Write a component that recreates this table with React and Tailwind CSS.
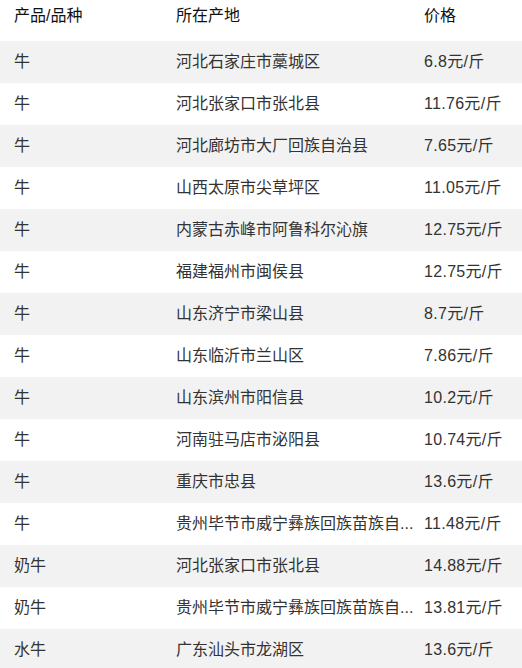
const rows = [
  ["牛", "河北石家庄市藁城区", "6.8元/斤"],
  ["牛", "河北张家口市张北县", "11.76元/斤"],
  ["牛", "河北廊坊市大厂回族自治县", "7.65元/斤"],
  ["牛", "山西太原市尖草坪区", "11.05元/斤"],
  ["牛", "内蒙古赤峰市阿鲁科尔沁旗", "12.75元/斤"],
  ["牛", "福建福州市闽侯县", "12.75元/斤"],
  ["牛", "山东济宁市梁山县", "8.7元/斤"],
  ["牛", "山东临沂市兰山区", "7.86元/斤"],
  ["牛", "山东滨州市阳信县", "10.2元/斤"],
  ["牛", "河南驻马店市泌阳县", "10.74元/斤"],
  ["牛", "重庆市忠县", "13.6元/斤"],
  ["牛", "贵州毕节市威宁彝族回族苗族自...", "11.48元/斤"],
  ["奶牛", "河北张家口市张北县", "14.88元/斤"],
  ["奶牛", "贵州毕节市威宁彝族回族苗族自...", "13.81元/斤"],
  ["水牛", "广东汕头市龙湖区", "13.6元/斤"],
];

export default function App() {
  return (
    <div
      className="w-[522px] h-[668px] overflow-hidden bg-white text-[16px]"
      style={{ fontFamily: '"Liberation Sans", "Noto Sans CJK SC", sans-serif' }}
    >
      <div className="flex h-[41px] pt-[5px] leading-[22px] text-[#111]">
        <div className="w-[162px] pl-[14px]">产品/品种</div>
        <div className="w-[256px] pl-[14px]">所在产地</div>
        <div className="flex-1 pl-[6px]">价格</div>
      </div>
      {rows.map((r, i) => (
        <div
          key={i}
          className={`flex h-[42px] items-center leading-[22px] text-[#333] ${
            i % 2 === 0 ? "bg-[#f2f2f2]" : "bg-white"
          }`}
        >
          <div className="w-[162px] shrink-0 pl-[14px]">{r[0]}</div>
          <div className="w-[256px] shrink-0 pl-[14px] whitespace-nowrap">{r[1]}</div>
          <div className="flex-1 pl-[6px] whitespace-nowrap tracking-[0.3px]">{r[2]}</div>
        </div>
      ))}
    </div>
  );
}
